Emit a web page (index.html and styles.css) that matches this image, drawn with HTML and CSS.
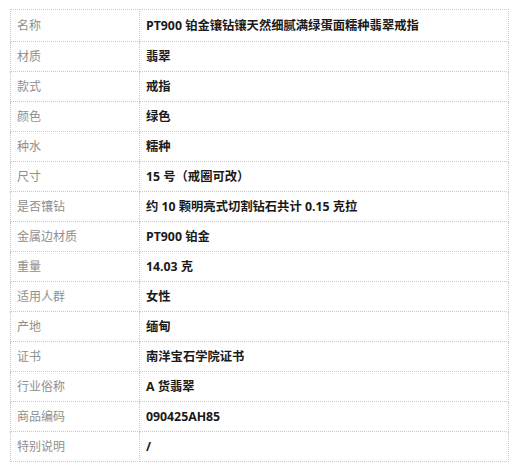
FILE: index.html
```html
<!DOCTYPE html>
<html lang="zh">
<head>
<meta charset="utf-8">
<link rel="stylesheet" href="styles.css">
</head>
<body>
<table class="spec">
  <tr class="first"><td class="k">名称</td><td class="v">PT900 铂金镶钻镶天然细腻满绿蛋面糯种翡翠戒指</td></tr>
  <tr><td class="k">材质</td><td class="v">翡翠</td></tr>
  <tr><td class="k">款式</td><td class="v">戒指</td></tr>
  <tr><td class="k">颜色</td><td class="v">绿色</td></tr>
  <tr><td class="k">种水</td><td class="v">糯种</td></tr>
  <tr><td class="k">尺寸</td><td class="v">15 号（戒圈可改）</td></tr>
  <tr><td class="k">是否镶钻</td><td class="v">约 10 颗明亮式切割钻石共计 0.15 克拉</td></tr>
  <tr><td class="k">金属边材质</td><td class="v">PT900 铂金</td></tr>
  <tr><td class="k">重量</td><td class="v">14.03 克</td></tr>
  <tr><td class="k">适用人群</td><td class="v">女性</td></tr>
  <tr><td class="k">产地</td><td class="v">缅甸</td></tr>
  <tr><td class="k">证书</td><td class="v">南洋宝石学院证书</td></tr>
  <tr><td class="k">行业俗称</td><td class="v">A 货翡翠</td></tr>
  <tr><td class="k">商品编码</td><td class="v">090425AH85</td></tr>
  <tr><td class="k">特别说明</td><td class="v">/</td></tr>
</table>
</body>
</html>
```

FILE: styles.css
```css
html, body {
  margin: 0;
  padding: 0;
  background: #fff;
}
body {
  font-family: "Open Sans", "Noto Sans CJK SC", sans-serif;
  font-size: 12px;
  color: #222;
}
.spec {
  margin: 9px 0 0 10px;
  width: 499px;
  border-collapse: collapse;
}
.spec td {
  border: 1px dotted #c8c8c8;
  height: 29px;
  padding: 0 0 0 6px;
  vertical-align: middle;
  line-height: 16px;
}
.spec tr.first td {
  height: 31px;
}
.spec .k {
  width: 122px;
  color: #8f8f8f;
}
.spec .v {
  font-weight: bold;
  font-size: 12.3px;
  color: #1a1a1a;
}
```
